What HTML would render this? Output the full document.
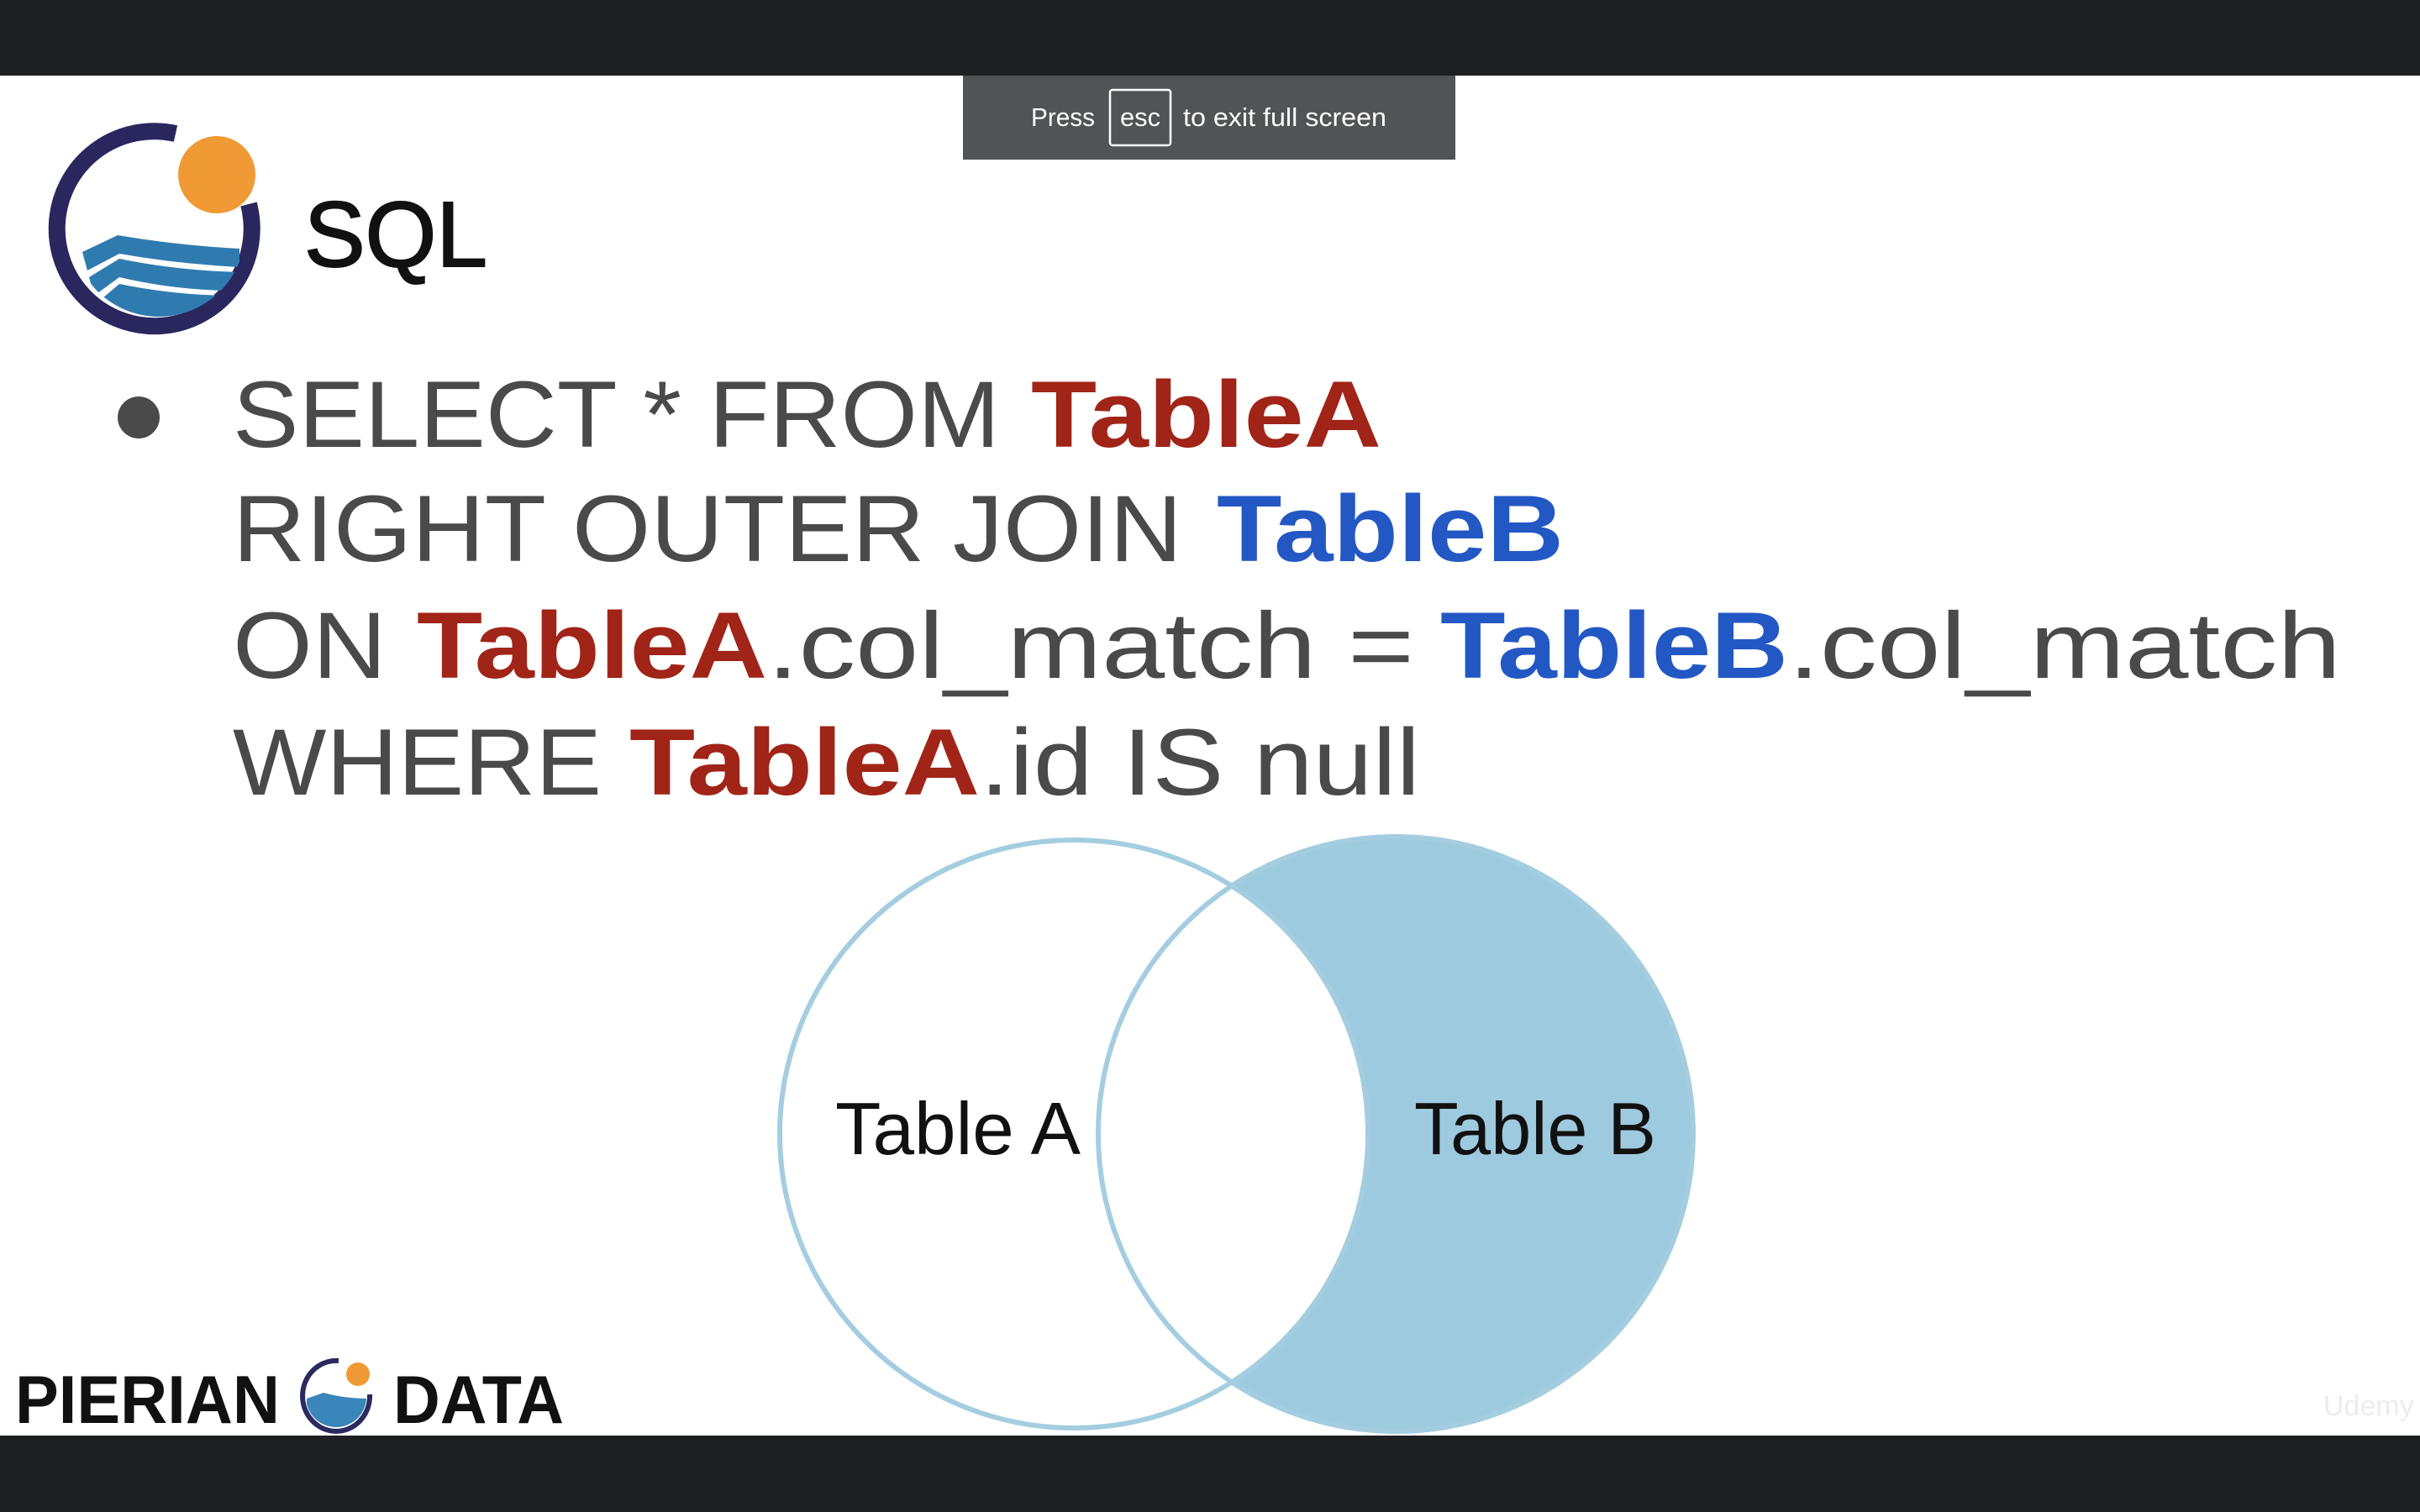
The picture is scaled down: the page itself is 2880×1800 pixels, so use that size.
<!DOCTYPE html>
<html><head><meta charset="utf-8"><style>
html,body{margin:0;padding:0;width:2880px;height:1800px;overflow:hidden;background:#fff}
svg{display:block}
</style></head><body>
<svg width="2880" height="1800" viewBox="0 0 2880 1800" xmlns="http://www.w3.org/2000/svg" font-family="'Liberation Sans', sans-serif">
<rect x="0" y="0" width="2880" height="1800" fill="#fff"/>

<defs>
<clipPath id="inner"><circle cx="189" cy="274" r="103"/></clipPath>
<clipPath id="inner2"><circle cx="400" cy="1663" r="36"/></clipPath>
</defs>
<path d="M 209 159 A 116 116 0 1 0 296 243" fill="none" stroke="#29275e" stroke-width="20"/>
<circle cx="258" cy="208" r="46" fill="#ef9a35"/>
<g clip-path="url(#inner)" fill="#2f7bb0">
<path d="M 98 300 L 140 280 Q 210 292 285 296 L 285 318 Q 210 314 142 302 L 104 322 Z"/>
<path d="M 106 330 L 142 308 Q 210 322 285 324 L 280 346 Q 210 346 142 330 L 112 352 Z"/>
<path d="M 116 360 L 142 338 Q 210 352 280 352 L 280 400 L 116 400 Z"/>
</g>
<text x="362" y="317" font-size="110" fill="#111" stroke="#111" stroke-width="2" textLength="218" lengthAdjust="spacingAndGlyphs">SQL</text>

<circle cx="165" cy="497" r="25" fill="#4a4a4a"/>
<g font-size="112" fill="#4a4a4a">
<text x="277" y="532" textLength="913" lengthAdjust="spacingAndGlyphs">SELECT * FROM</text>
<text x="1227" y="532" textLength="417" lengthAdjust="spacingAndGlyphs" font-weight="bold" fill="#a02418">TableA</text>
<text x="277" y="668" textLength="1130" lengthAdjust="spacingAndGlyphs">RIGHT OUTER JOIN</text>
<text x="1448" y="668" textLength="413" lengthAdjust="spacingAndGlyphs" font-weight="bold" fill="#2358c4">TableB</text>
<text x="277" y="807" textLength="183" lengthAdjust="spacingAndGlyphs">ON</text>
<text x="496" y="807" textLength="417" lengthAdjust="spacingAndGlyphs" font-weight="bold" fill="#a02418">TableA</text>
<text x="913" y="807" textLength="770" lengthAdjust="spacingAndGlyphs">.col_match =</text>
<text x="1714" y="807" textLength="414" lengthAdjust="spacingAndGlyphs" font-weight="bold" fill="#2358c4">TableB</text>
<text x="2128" y="807" textLength="658" lengthAdjust="spacingAndGlyphs">.col_match</text>
<text x="277" y="946" textLength="439" lengthAdjust="spacingAndGlyphs">WHERE</text>
<text x="749" y="946" textLength="417" lengthAdjust="spacingAndGlyphs" font-weight="bold" fill="#a02418">TableA</text>
<text x="1166" y="946" textLength="524" lengthAdjust="spacingAndGlyphs">.id IS null</text>
</g>

<circle cx="1661" cy="1350" r="354" fill="#9ecadf"/>
<circle cx="1278" cy="1350" r="350" fill="#fff"/>
<circle cx="1278" cy="1350" r="350" fill="none" stroke="#a4cde0" stroke-width="6"/>
<circle cx="1661" cy="1350" r="354" fill="none" stroke="#a4cde0" stroke-width="6"/>
<text x="994" y="1374" font-size="88" fill="#111" textLength="292" lengthAdjust="spacingAndGlyphs">Table A</text>
<text x="1683" y="1374" font-size="88" fill="#111" textLength="288" lengthAdjust="spacingAndGlyphs">Table B</text>

<text x="18" y="1694" font-size="81" font-weight="bold" fill="#111" textLength="315" lengthAdjust="spacingAndGlyphs">PIERIAN</text>
<path d="M 403 1620 A 40 42 0 1 0 440 1660" fill="none" stroke="#2b2a5e" stroke-width="6"/>
<circle cx="426" cy="1636" r="14" fill="#ef9a35"/>
<g clip-path="url(#inner2)" fill="#3a86bb">
<path d="M 365 1665 L 385 1658 Q 410 1665 440 1665 L 440 1700 L 365 1700 Z"/>
</g>
<text x="468" y="1694" font-size="81" font-weight="bold" fill="#111" textLength="203" lengthAdjust="spacingAndGlyphs">DATA</text>

<text x="2765" y="1685" font-size="34" fill="#ececec">Udemy</text>

<rect x="0" y="0" width="2880" height="90" fill="#1e1f21"/>
<rect x="0" y="1709" width="2880" height="91" fill="#1e1f21"/>

<rect x="1146" y="90" width="586" height="100" fill="#525357"/>
<rect x="1321" y="107" width="72" height="66" rx="3" fill="none" stroke="#fff" stroke-width="2.5"/>
<g font-size="31" fill="#fff">
<text x="1227" y="150" textLength="76" lengthAdjust="spacingAndGlyphs">Press</text>
<text x="1333" y="150" textLength="48" lengthAdjust="spacingAndGlyphs">esc</text>
<text x="1408" y="150" textLength="242" lengthAdjust="spacingAndGlyphs">to exit full screen</text>
</g>
</svg>
</body></html>
